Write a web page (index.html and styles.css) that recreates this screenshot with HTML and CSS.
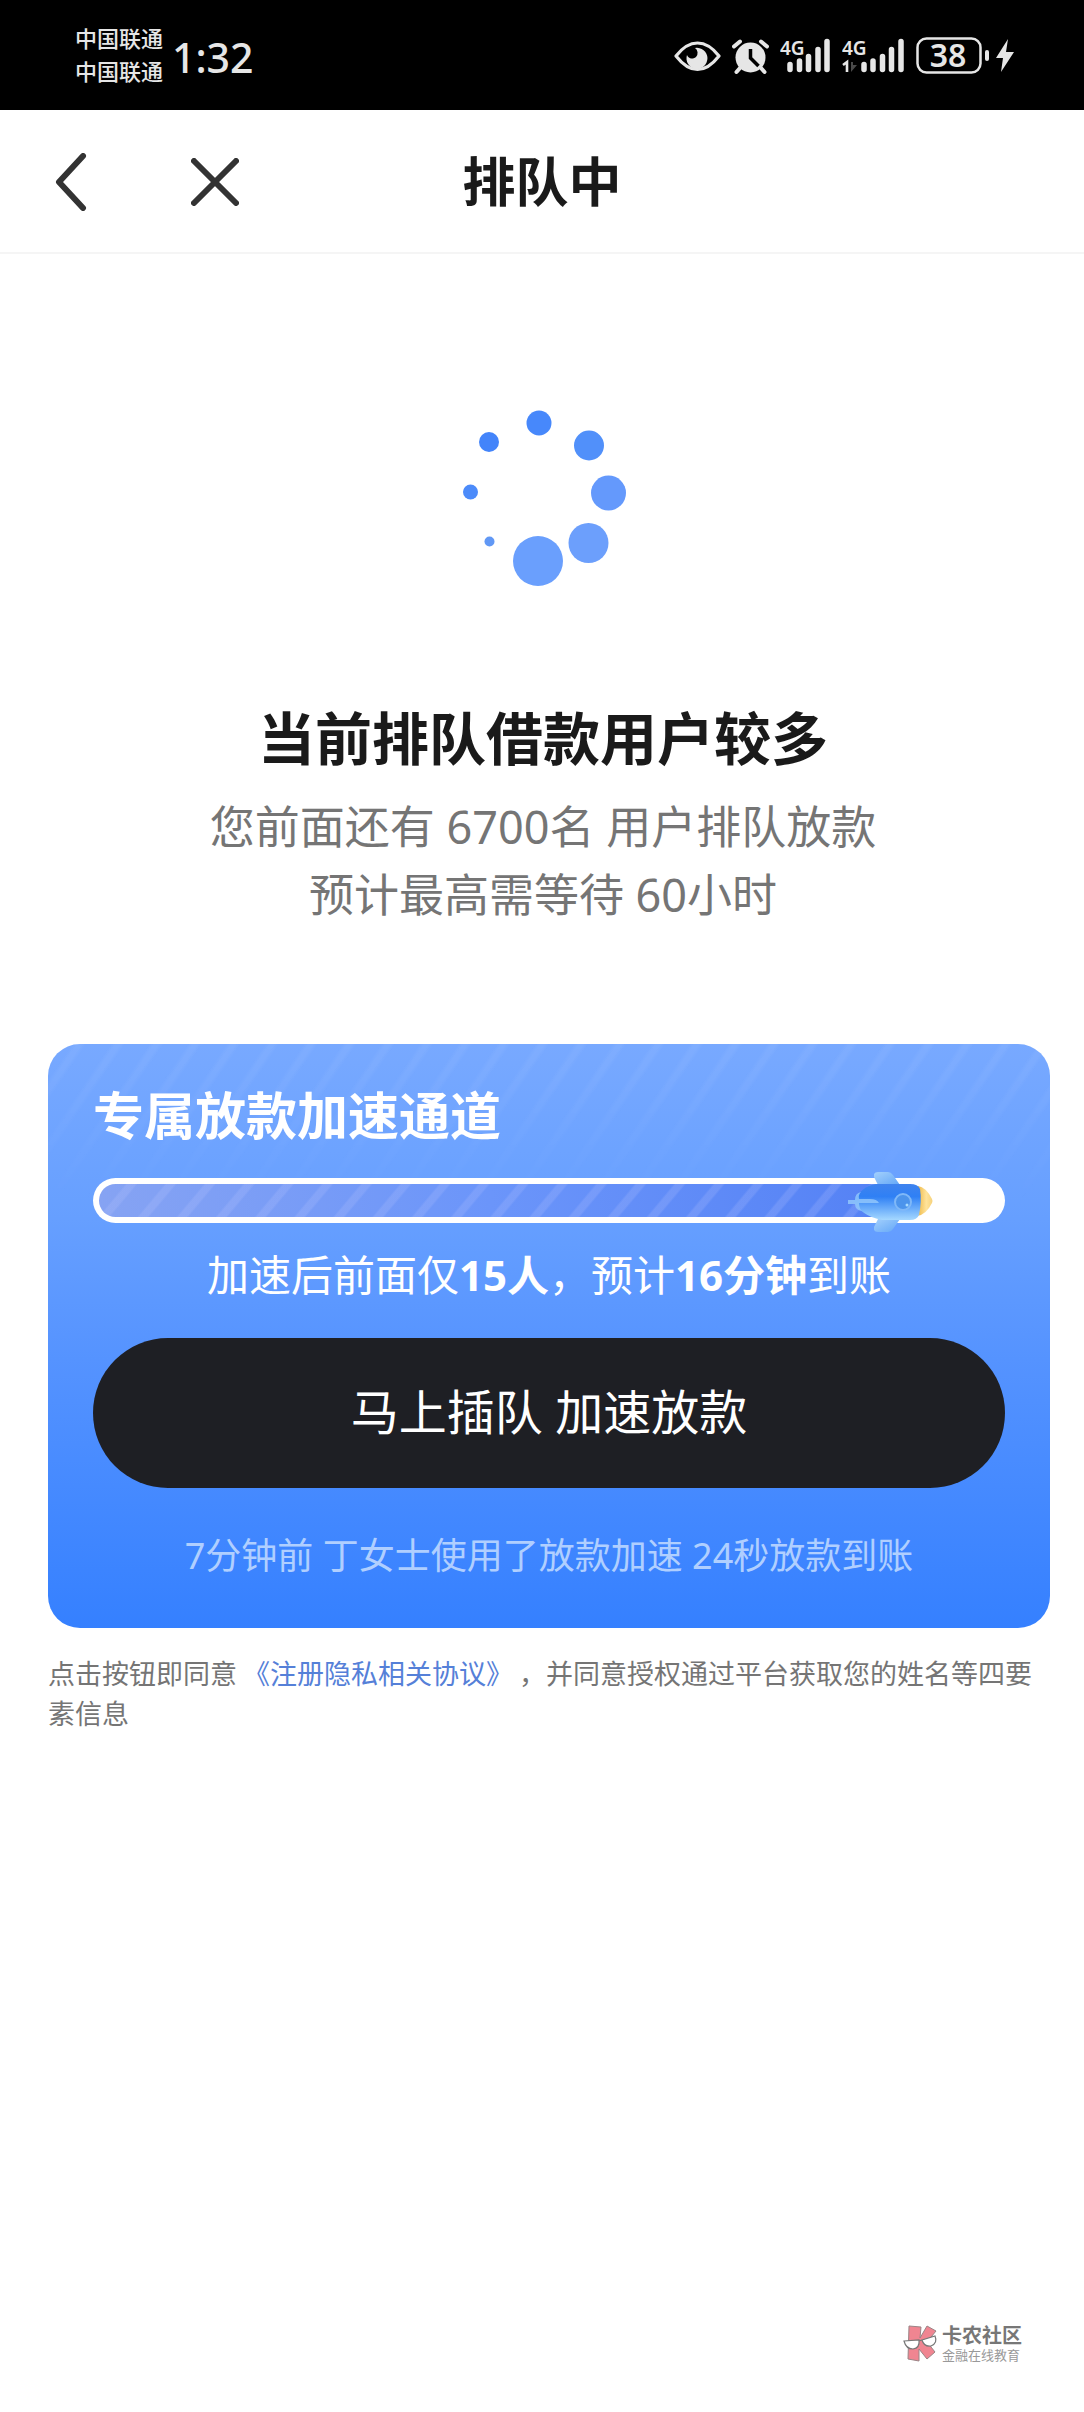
FILE: index.html
```html
<!DOCTYPE html>
<html lang="zh-CN">
<head>
<meta charset="utf-8">
<meta name="viewport" content="width=device-width, initial-scale=1">
<title>排队中</title>
<link rel="stylesheet" href="styles.css">
</head>
<body>
<div class="page">
  <div class="status">
    <div class="carriers"><span>中国联通</span><span>中国联通</span></div>
    <span class="clock">1:32</span>
    <div class="status-icons">
      <svg width="47" height="40" viewBox="0 0 47 40" aria-hidden="true">
        <path d="M2 21C9 12 16 8 23.500 8S38 12 45 21C38 30 31 34.500 23.500 34.500S9 30 2 21Z" fill="none" stroke="#e6e6e6" stroke-width="3.200" stroke-linejoin="round"/>
        <path d="M21 13a10.500 10.500 0 1 1-8 7 5.500 5.500 0 0 0 9 2 6 6 0 0 0-1-9Z" fill="#e6e6e6"/>
      </svg>
      <svg width="37" height="40" viewBox="0 0 37 40" aria-hidden="true">
        <circle cx="18.500" cy="22.500" r="15" fill="#e6e6e6"/>
        <path d="M2 11.500L8 6.500M35 11.500L29 6.500M8 33L4.500 37M29 33l3.500 4" stroke="#e6e6e6" stroke-width="4" stroke-linecap="round"/>
        <path d="M18.500 14v9l8 8" fill="none" stroke="#000" stroke-width="3.500"/>
      </svg>
      <svg width="51" height="40" viewBox="0 0 51 40" role="img" aria-label="4G">
        <text class="net" x="0" y="20">4G</text>
        <path d="M10 29.500v5M19.500 26v8.500M28.500 21.500v13M38 14.500v20M47 6.500v28" stroke="#e6e6e6" stroke-width="5.500" stroke-linecap="round"/>
      </svg>
      <svg width="63" height="40" viewBox="0 0 63 40" role="img" aria-label="4G">
        <text class="net" x="0" y="20">4G</text>
        <path d="M1 30l4-3v10" fill="none" stroke="#e6e6e6" stroke-width="2.600"/>
        <path d="M9 27v10l6-7h-4v-3Z" fill="#4a4a4a"/>
        <path d="M22 29.500v5M31 26v8.500M40.500 21.500v13M49.500 14.500v20M59 6.500v28" stroke="#e6e6e6" stroke-width="5.500" stroke-linecap="round"/>
      </svg>
      <svg width="98" height="52" viewBox="0 -6 98 52" role="img" aria-label="38%">
        <rect x="1.500" y="3.500" width="63" height="34" rx="9" fill="none" stroke="#e6e6e6" stroke-width="2.500"/>
        <rect x="69" y="15" width="4" height="11" rx="2" fill="#e6e6e6"/>
        <text class="charge" x="32" y="32">38</text>
        <path d="M92 4L80 23h7l-2 14 13-20h-8Z" fill="#e6e6e6"/>
      </svg>
    </div>
  </div>

  <header class="nav">
    <div class="nav-actions">
      <button class="icon-btn" type="button" aria-label="返回">
        <svg width="32" height="58" viewBox="0 0 32 58"><path d="M28 3L4 29l24 26" fill="none" stroke="#333" stroke-width="6" stroke-linecap="round" stroke-linejoin="round"/></svg>
      </button>
      <button class="icon-btn" type="button" aria-label="关闭">
        <svg width="48" height="48" viewBox="0 0 48 48"><path d="M3 3l42 42M45 3L3 45" fill="none" stroke="#333" stroke-width="6" stroke-linecap="round"/></svg>
      </button>
    </div>
    <h1 class="nav-title">排队中</h1>
  </header>

  <main class="content">
    <section class="queue">
      <svg width="170" height="176" viewBox="0 0 170 176" aria-hidden="true">
        <circle cx="81" cy="13" r="12.500" fill="#4788fb"/>
        <circle cx="131" cy="35.500" r="15" fill="#5190fa"/>
        <circle cx="150.500" cy="83" r="17.500" fill="#6499fc"/>
        <circle cx="130.500" cy="133" r="20" fill="#6c9ffc"/>
        <circle cx="80" cy="151" r="25" fill="#6a9ffd"/>
        <circle cx="31.500" cy="131.500" r="5" fill="#6198f5"/>
        <circle cx="12.500" cy="82" r="7.500" fill="#4c8bfa"/>
        <circle cx="31" cy="32" r="10" fill="#4384fa"/>
      </svg>
      <h2 class="queue-title">当前排队借款用户较多</h2>
      <p class="queue-text">您前面还有 6700名 用户排队放款<br>预计最高需等待 60小时</p>
    </section>

    <section class="card">
      <h2 class="card-title">专属放款加速通道</h2>
      <div class="track">
        <div class="track-fill"></div>
        <svg class="rocket" width="86" height="60" viewBox="0 0 86 60" aria-hidden="true">
          <defs>
            <linearGradient id="body" x1="0" y1="0" x2="0" y2="1"><stop offset="0" stop-color="#3f83ee"/><stop offset=".35" stop-color="#2f80f5"/><stop offset="1" stop-color="#a5d8ff"/></linearGradient>
            <linearGradient id="wing" x1="0" y1="0" x2="1" y2="1"><stop offset="0" stop-color="#a3d0fc"/><stop offset="1" stop-color="#62a6f7"/></linearGradient>
            <linearGradient id="nose" x1="0" y1="0" x2="1" y2="0"><stop offset="0" stop-color="#edb541"/><stop offset=".6" stop-color="#ffe39a"/><stop offset="1" stop-color="#f6d27c"/></linearGradient>
          </defs>
          <path d="M26 2q1-2 4-2h10q3 0 5 3l7 10H30l-4-8Z" fill="url(#wing)"/>
          <path d="M26 58q1 2 4 2h10q3 0 5-3l7-10H30l-4 8Z" fill="url(#wing)"/>
          <path d="M70 14q8 1 14 13 1 2 0 4-6 12-15 13Z" fill="url(#nose)"/>
          <path d="M28 12h34q8 0 10 5 2 12-1 26-2 5-9 5H34Q13 44 6 29 14 14 28 12Z" fill="url(#body)"/>
          <path d="M0 28h7q0-7 6-8-3 3-2 7h11q7 0 9 4H11q0 5 3 8-7-1-7-7H0Z" fill="#91c5fb" opacity=".85"/>
          <circle cx="55" cy="30" r="8" fill="#4c94ec" stroke="#7fb8f8" stroke-width="2"/>
          <circle cx="59" cy="33" r="1.500" fill="#a9dcff"/>
        </svg>
      </div>
      <p class="card-text">加速后前面仅<strong>15人</strong>，预计<strong>16分钟</strong>到账</p>
      <button class="cta" type="button">马上插队 加速放款</button>
      <p class="card-note">7分钟前 丁女士使用了放款加速 24秒放款到账</p>
    </section>

    <p class="terms">点击按钮即同意 <a href="#terms">《注册隐私相关协议》</a> ，并同意授权通过平台获取您的姓名等四要素信息</p>
  </main>

  <footer class="brand">
    <svg width="36" height="38" viewBox="0 0 36 38" aria-hidden="true">
      <path d="M6 1L18 2 17 13 24 1 33 6 24 17 32 27 24 34 16 24 16 36 5 34Z" fill="#f08591" stroke="#9a8486" stroke-width="1"/>
      <path d="M1 16l15-1q1 8-6 9-7 0-9-8ZM19 15l13-4q3 7-4 10-7 1-9-6ZM16 16l3-1" fill="#fff" stroke="#777" stroke-width="1.200"/>
    </svg>
    <div class="brand-text"><span class="brand-name">卡农社区</span><span class="brand-sub">金融在线教育</span></div>
  </footer>
</div>
</body>
</html>
```
FILE: styles.css
```css
* { box-sizing: border-box; }
body {
  margin: 0;
  background: #fff;
  color: #1a1a1a;
  font-family: "Noto Sans", "Noto Sans CJK SC", sans-serif;
}
h1, h2, p { margin: 0; }
button { font: inherit; border: 0; padding: 0; background: none; color: inherit; cursor: pointer; }
svg { display: block; flex: none; }

.page { display: flex; flex-direction: column; min-height: 100vh; }

.status {
  display: flex;
  align-items: center;
  height: 110px;
  padding: 0 70px 0 75px;
  background: #000;
  color: #e6e6e6;
}
.carriers { display: flex; flex-direction: column; font-size: 22px; line-height: 33px; font-weight: 500; }
.clock { margin-left: 9px; padding-top: 4px; font-size: 41px; line-height: 60px; font-weight: 500; }
.status-icons { display: flex; align-items: center; gap: 11px; margin-left: auto; }
.net { font-size: 19px; font-weight: 600; fill: #e6e6e6; }
.charge { font-size: 32px; font-weight: 600; fill: #e6e6e6; text-anchor: middle; }

.nav {
  display: grid;
  grid-template-columns: 1fr auto 1fr;
  align-items: center;
  height: 144px;
  padding: 2px 55px 0;
  border-bottom: 2px solid #f5f5f5;
}
.nav-actions { display: flex; align-items: center; gap: 104px; }
.icon-btn { display: flex; }
.nav-title { font-size: 53px; line-height: 80px; font-weight: 700; }

.content { padding: 156px 34px 0 48px; }
.queue { display: flex; flex-direction: column; align-items: center; margin-right: 12px; text-align: center; }
.queue-title { margin-top: 112px; font-size: 57px; line-height: 80px; font-weight: 700; }
.queue-text { margin-top: 15px; font-size: 45px; line-height: 68px; color: #757575; }

.card {
  position: relative;
  display: flex;
  flex-direction: column;
  margin-top: 115px;
  padding: 36px 45px 47px;
  border-radius: 32px;
  background: linear-gradient(#78a9ff, #669fff 30%, #5593ff 54%, #3580ff);
  color: #fff;
  text-align: center;
  overflow: hidden;
}
.card::before {
  content: "";
  position: absolute;
  inset: 0 0 auto;
  height: 160px;
  background: repeating-linear-gradient(124deg, transparent 0 20px, rgba(255, 255, 255, .06) 24px 28px, transparent 32px);
  mask-image: linear-gradient(#000, transparent);
}
.card-title { font-size: 51px; line-height: 70px; font-weight: 700; text-align: left; }
.track {
  position: relative;
  display: flex;
  height: 45px;
  margin-top: 28px;
  padding: 6px;
  border-radius: 23px;
  background: #fff;
}
.track-fill {
  width: 87%;
  border-radius: 17px 0 0 17px;
  background:
    repeating-linear-gradient(130deg, transparent 0 20px, rgba(190, 200, 255, .2) 22px 28px, transparent 30px),
    linear-gradient(90deg, #86a3f3, #6b95fa 50%, #5582f5);
}
.rocket { position: absolute; right: 71px; top: -6px; }
.card-text { margin-top: 22px; font-size: 42px; line-height: 60px; }
.cta {
  height: 150px;
  margin-top: 33px;
  padding-bottom: 3px;
  border-radius: 75px;
  background: #1e1f24;
  font-size: 48px;
  line-height: 70px;
}
.card-note { margin-top: 43px; font-size: 36px; line-height: 50px; color: #b0cfff; }

.terms {
  margin-top: 25px;
  color: #757575;
  font-family: "Noto Sans CJK SC", sans-serif;
  font-size: 27px;
  line-height: 40px;
}
.terms a { color: #5580d8; text-decoration: none; }

.brand { display: flex; align-items: center; justify-content: flex-end; gap: 3px; margin-top: auto; padding: 40px 62px 49px; }
.brand-text { display: flex; flex-direction: column; color: #777; }
.brand-name { font-size: 20px; line-height: 22px; font-weight: 700; }
.brand-sub { font-size: 13px; line-height: 16px; color: #999; }
```
